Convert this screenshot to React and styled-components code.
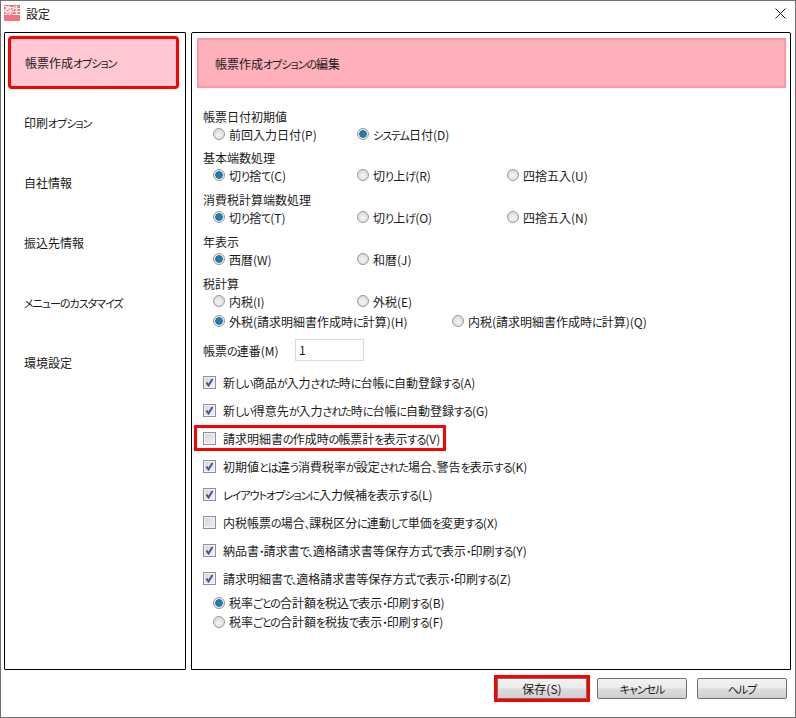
import React from 'react'
import styled, { createGlobalStyle } from 'styled-components'

const GlobalStyle = createGlobalStyle`
  html, body {
    margin: 0;
    padding: 0;
    background: #fff;
  }
  body {
    font-family: "Noto Sans CJK JP", "Noto Sans", sans-serif;
    font-size: 12px;
    font-feature-settings: "palt";
    color: #1a1a1a;
  }
`

const Window = styled.div`
  box-sizing: border-box;
  width: 796px;
  height: 718px;
  display: flex;
  flex-direction: column;
  border: 1px solid #707070;
  background: #fff;
  overflow: hidden;
`
const TitleBar = styled.div`
  display: flex;
  align-items: center;
  height: 31px;
  flex: none;
  padding: 0 9px 7px 3px;
  box-sizing: border-box;
`
const Logo = styled.div`
  width: 16px;
  height: 16px;
  background: #f0757f;
  color: #fff;
  font-size: 9px;
  font-weight: 700;
  line-height: 11px;
  letter-spacing: -1px;
  text-align: center;
  white-space: nowrap;
`
const Title = styled.div`
  margin-left: 6px;
  flex: 1;
`
const Kana = styled.span`
  font-size: 11px;
  letter-spacing: -1px;
`
const Body = styled.div`
  display: flex;
  gap: 5px;
  height: 638px;
  padding: 0 4px 0 3px;
  flex: none;
`
const Sidebar = styled.nav`
  box-sizing: border-box;
  width: 182px;
  border: 1px solid #000;
  border-radius: 1px;
  display: flex;
  flex-direction: column;
`
const NavItem = styled.div`
  display: flex;
  align-items: center;
  flex: none;
  box-sizing: border-box;
  height: ${(p) => (p.$active ? '47px' : '60px')};
  margin: ${(p) => (p.$active ? '6px 9px 7px 6px' : '0')};
  padding-left: ${(p) => (p.$active ? '14px' : '19px')};
  padding-bottom: ${(p) => (p.$active ? '0' : '2px')};
  background: ${(p) => (p.$active ? '#ffc8d2' : 'transparent')};
  outline: ${(p) => (p.$active ? '3px solid #ff0000' : 'none')};
  border-radius: 1px;
  white-space: nowrap;
`
const Panel = styled.main`
  box-sizing: border-box;
  width: 600px;
  border: 1px solid #000;
  border-radius: 2px 2px 0 0;
  padding: 5px 4px 0 5px;
`
const PanelHeader = styled.div`
  box-sizing: border-box;
  height: 50px;
  display: flex;
  align-items: center;
  padding-left: 16px;
  background: #ffb0bb;
  border: 2px solid #ff95a5;
  white-space: nowrap;
`
const Form = styled.div`
  padding: 20px 0 0 6px;
`
const Group = styled.div`
  margin-bottom: 7px;
  &:first-child {
    margin-bottom: 6px;
  }
`
const GroupLabel = styled.div`
  height: 18px;
  line-height: 18px;
`
const RadioRow = styled.div`
  display: grid;
  grid-template-columns: ${(p) => p.$cols || '144px 150px 150px'};
  height: ${(p) => p.$height || 18}px;
  margin-top: ${(p) => p.$top ?? -1}px;
  padding-left: 10px;
  align-items: center;
`
const RadioItem = styled.label`
  display: inline-flex;
  align-items: center;
  gap: 4px;
  white-space: nowrap;
`
const RadioDot = styled.span`
  box-sizing: border-box;
  width: 12px;
  height: 12px;
  flex: none;
  border-radius: 50%;
  border: 1px solid #9a9a9a;
  background: ${(p) =>
    p.$checked
      ? 'radial-gradient(circle at 50% 50%, #1f7fb5 0, #1f7fb5 2.6px, #0e5c8c 3.4px, #e6e6e6 4px, #f2f2f2 100%)'
      : 'radial-gradient(circle at 50% 60%, #f6f6f6 0, #e0e0e0 60%, #cfcfcf 100%)'};
`
const SerialRow = styled.div`
  display: flex;
  align-items: center;
  height: 22px;
  margin: 7px 0 7px;
`
const SerialLabel = styled.span`
  width: 92px;
  white-space: nowrap;
`
const SerialInput = styled.div`
  box-sizing: border-box;
  width: 69px;
  height: 22px;
  padding-left: 3px;
  line-height: 20px;
  border: 1px solid #dcdcdc;
  background: #fff;
`
const CheckRow = styled.div`
  display: flex;
  align-items: center;
  height: 28px;
`
const CheckItem = styled.label`
  display: inline-flex;
  align-items: center;
  gap: 7px;
  height: ${(p) => (p.$marked ? '20px' : '22px')};
  white-space: nowrap;
  outline: ${(p) => (p.$marked ? '3px solid #ff0000' : 'none')};
  margin-left: ${(p) => (p.$marked ? '-6px' : '0')};
  padding: ${(p) => (p.$marked ? '0 3px 0 6px' : '0')};
`
const CheckBoxFace = styled.span`
  box-sizing: border-box;
  width: 13px;
  height: 13px;
  flex: none;
  display: flex;
  align-items: center;
  justify-content: center;
  border: 1px solid #8e8f9a;
  background: linear-gradient(135deg, #d4d4d8, #f2f2f4);
  box-shadow: inset 0 0 0 1px #f4f4f4;
`
const SubOptions = styled.div`
  margin-top: 1px;
`
const Footer = styled.div`
  display: flex;
  justify-content: flex-end;
  gap: 10px;
  padding: 8px 8px 0 0;
`
const Button = styled.button`
  box-sizing: border-box;
  width: 90px;
  height: 21px;
  padding: 0;
  font: inherit;
  font-feature-settings: inherit;
  color: #1a1a1a;
  border: 1px solid #707070;
  border-radius: ${(p) => (p.$marked ? '0' : '2px')};
  background: linear-gradient(#f2f2f2 0, #ebebeb 48%, #dddddd 52%, #cfcfcf 100%);
  outline: ${(p) => (p.$marked ? '3px solid #ff0000' : 'none')};
`

const CloseIcon = () => (
  <svg width="11" height="11" viewBox="0 0 11 11" fill="none" stroke="#1a1a1a" strokeWidth="1">
    <path d="M0.5 0.5L10.5 10.5M10.5 0.5L0.5 10.5" />
  </svg>
)

const CheckMark = () => (
  <svg width="9" height="9" viewBox="0 0 9 9" fill="none" stroke="#3f5a9a" strokeWidth="2">
    <path d="M1.5 4.5L3.5 7.5L7.5 1" />
  </svg>
)

// the reference font has narrow kana, so kana runs get their own tighter span
const Label = ({ text }) =>
  text.split(/([\u3040-\u30ff、]+)/).map((part, i) => (i % 2 ? <Kana key={i}>{part}</Kana> : part))

const Radio = ({ label, checked }) => (
  <RadioItem>
    <RadioDot $checked={checked} />
    <span>
      <Label text={label} />
    </span>
  </RadioItem>
)

const Check = ({ label, checked, marked }) => (
  <CheckRow>
    <CheckItem $marked={marked}>
      <CheckBoxFace>{checked && <CheckMark />}</CheckBoxFace>
      <span>
        <Label text={label} />
      </span>
    </CheckItem>
  </CheckRow>
)

const navItems = ['帳票作成オプション', '印刷オプション', '自社情報', '振込先情報', 'メニューのカスタマイズ', '環境設定']

const radioGroups = [
  { title: '帳票日付初期値', options: [['前回入力日付(P)'], ['システム日付(D)', true]] },
  { title: '基本端数処理', options: [['切り捨て(C)', true], ['切り上げ(R)'], ['四捨五入(U)']] },
  { title: '消費税計算端数処理', options: [['切り捨て(T)', true], ['切り上げ(O)'], ['四捨五入(N)']] },
  { title: '年表示', options: [['西暦(W)', true], ['和暦(J)']] },
]

const checks = [
  ['新しい商品が入力された時に台帳に自動登録する(A)', true],
  ['新しい得意先が入力された時に台帳に自動登録する(G)', true],
  ['請求明細書の作成時の帳票計を表示する(V)', false, true],
  ['初期値とは違う消費税率が設定された場合、警告を表示する(K)', true],
  ['レイアウトオプションに入力候補を表示する(L)', true],
  ['内税帳票の場合、課税区分に連動して単価を変更する(X)', false],
  ['納品書・請求書で、適格請求書等保存方式で表示・印刷する(Y)', true],
  ['請求明細書で、適格請求書等保存方式で表示・印刷する(Z)', true],
]

export default function App() {
  return (
    <>
      <GlobalStyle />
      <Window>
        <TitleBar>
          <Logo>弥生</Logo>
          <Title>設定</Title>
          <CloseIcon />
        </TitleBar>
        <Body>
          <Sidebar>
            {navItems.map((item, i) => (
              <NavItem key={item} $active={i === 0}>
                <span>
                  <Label text={item} />
                </span>
              </NavItem>
            ))}
          </Sidebar>
          <Panel>
            <PanelHeader>
              <span>
                <Label text="帳票作成オプションの編集" />
              </span>
            </PanelHeader>
            <Form>
              {radioGroups.map((group) => (
                <Group key={group.title}>
                  <GroupLabel>
                    <Label text={group.title} />
                  </GroupLabel>
                  <RadioRow>
                    {group.options.map(([label, checked]) => (
                      <Radio key={label} label={label} checked={checked} />
                    ))}
                  </RadioRow>
                </Group>
              ))}
              <Group>
                <GroupLabel>税計算</GroupLabel>
                <RadioRow>
                  <Radio label="内税(I)" />
                  <Radio label="外税(E)" />
                </RadioRow>
                <RadioRow $cols="239px 300px" $height={22} $top={0}>
                  <Radio label="外税(請求明細書作成時に計算)(H)" checked />
                  <Radio label="内税(請求明細書作成時に計算)(Q)" />
                </RadioRow>
              </Group>
              <SerialRow>
                <SerialLabel>
                  <Label text="帳票の連番(M)" />
                </SerialLabel>
                <SerialInput>1</SerialInput>
              </SerialRow>
              {checks.map(([label, checked, marked]) => (
                <Check key={label} label={label} checked={checked} marked={marked} />
              ))}
              <SubOptions>
                <RadioRow $height={19} $top={0}>
                  <Radio label="税率ごとの合計額を税込で表示・印刷する(B)" checked />
                </RadioRow>
                <RadioRow $height={19} $top={0}>
                  <Radio label="税率ごとの合計額を税抜で表示・印刷する(F)" />
                </RadioRow>
              </SubOptions>
            </Form>
          </Panel>
        </Body>
        <Footer>
          <Button $marked>
            <Label text="保存(S)" />
          </Button>
          <Button>
            <Label text="キャンセル" />
          </Button>
          <Button>
            <Label text="ヘルプ" />
          </Button>
        </Footer>
      </Window>
    </>
  )
}
